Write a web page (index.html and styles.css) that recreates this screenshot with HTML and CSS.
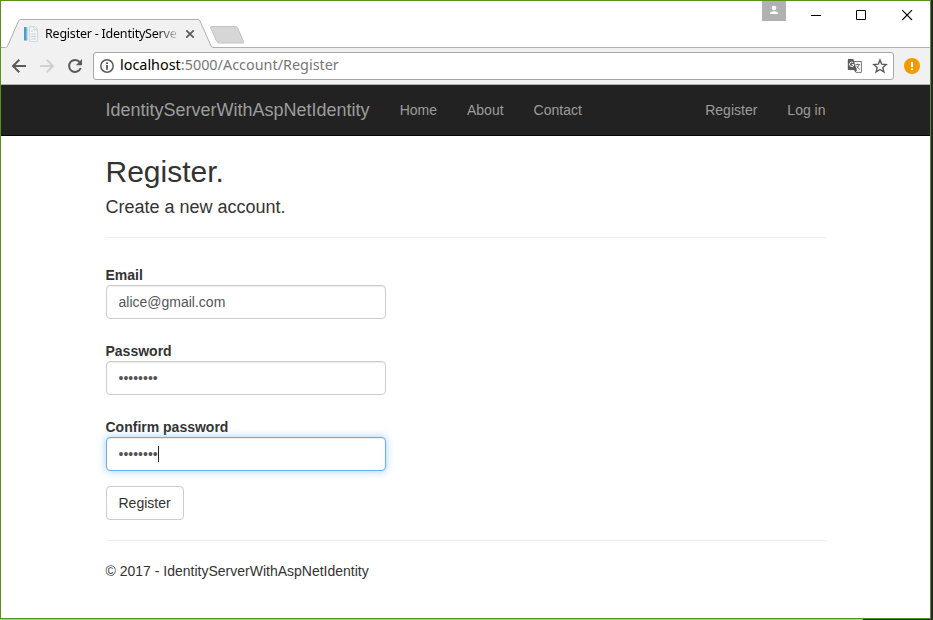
FILE: index.html
```html
<!DOCTYPE html>
<html lang="en">
<head>
<meta charset="utf-8">
<title>Register - IdentityServerWithAspNetIdentity</title>
<link rel="stylesheet" href="styles.css">
</head>
<body>
<div class="window">
  <div class="tabstrip">
    <svg class="tab-shape" width="929" height="48" viewBox="1 0 929 48">
      <path d="M1 47.5H5.500Q7 47.500 7.600 46L18.500 21Q19.200 19.500 20.500 19.500H198Q199.500 19.500 200 21L211 46Q211.600 47.500 213 47.500V49H1Z" fill="#f1f1f1"/>
      <path d="M1 47.5H5.500Q7 47.500 7.600 46L18.500 21Q19.200 19.500 20.500 19.500H198Q199.500 19.500 200 21L211 46Q211.600 47.500 213 47.500H930" fill="none" stroke="#b0b0b0"/>
      <path d="M212 26.500H235.500Q237 26.500 237.700 28L243.500 41.500Q244 43 242.500 43H219Q217.500 43 216.800 41.500L210.700 28Q210.200 26.500 212 26.500Z" fill="#d6d6d6" stroke="#c2c2c2"/>
    </svg>
    <div class="tab">
      <svg width="16" height="16" viewBox="0 0 16 16">
        <path d="M1 1H4V14.500H1Z" fill="#4f9bc9"/><path d="M3.500 1H5V14.500H3.500Z" fill="#bdd9e8"/>
        <path d="M6.500.500H11.500L14.500 3.500V15.500H6.500Z" fill="#f3f6f8" stroke="#ccd7df"/>
        <path d="M8 5H10M8 8H13M8 10.500H13M8 13H13M11 1V4H14" stroke="#c4cfd9" fill="none"/>
      </svg>
      <span class="tab-title">Register - IdentityServe</span>
      <svg class="tab-close" width="10" height="10" viewBox="0 0 10 10"><path d="M1.300 1.300L8.700 8.700M8.700 1.300L1.300 8.700" stroke="#5a5a5a" stroke-width="1.700"/></svg>
    </div>
    <div class="controls">
      <div class="user"><svg width="24" height="20" viewBox="0 0 24 20"><circle cx="12" cy="7" r="2.300" fill="#fff"/><path d="M8 13V11.800Q8.500 10.200 12 10.200T16 11.800V13Z" fill="#fff"/></svg></div>
      <svg width="120" height="30" viewBox="0 0 120 30" fill="none" stroke="#000">
        <path d="M25 14.500H35"/><path d="M70.500 9.500H79.500V18.500H70.500Z"/><path d="M116.200 9.200L126 19M126 9.200L116.200 19" stroke-width="1.100"/>
      </svg>
    </div>
  </div>
  <div class="toolbar">
    <svg width="92" height="36" viewBox="1 48 92 36" fill="none">
      <path d="M26 66H13.500M19.300 59.700L13 66L19.300 72.300" stroke="#5a5a5a" stroke-width="2"/>
      <path d="M40 66H52.500M46.700 59.700L53 66L46.700 72.300" stroke="#d0d0d0" stroke-width="2"/>
      <path d="M79.800 62.200A6 6 0 1 0 80.700 68" stroke="#5a5a5a" stroke-width="2"/>
      <path d="M82 59V65.200H75.800Z" fill="#5a5a5a"/>
    </svg>
    <div class="omnibox">
      <svg width="14" height="14" viewBox="0 0 14 14"><circle cx="7" cy="7" r="6.200" fill="none" stroke="#5a5a5a" stroke-width="1.500"/><path d="M7 3.200V4.900M7 6V10.800" stroke="#5a5a5a" stroke-width="1.800"/></svg>
      <span class="url"><b>localhost</b>:5000/Account/Register</span>
      <svg width="16" height="16" viewBox="0 0 16 16">
        <path d="M7 3.500H14.400V14.400H9" fill="#fff" stroke="#777"/>
        <path d="M1.500 1H6.300L9.800 12H1.500Q.800 12 .800 11V2Q.800 1 1.500 1Z" fill="#5a5a5a"/><path d="M7 12H10L8.500 14.500Z" fill="#5a5a5a"/>
        <path d="M6.200 4.700A2.200 2.200 0 1 0 6.900 6.600H4.900" stroke="#fff" fill="none"/>
        <path d="M8.500 6.500H13M10.700 5.500V6.500M12.300 6.500Q11.500 9 9.500 10.500M9.500 7.800Q11 10.500 13 11.500" stroke="#777" fill="none"/>
      </svg>
      <svg class="star" width="16" height="16" viewBox="0 0 16 16"><path d="M8 1.900L9.700 6.100L14.200 6.500L10.800 9.400L11.900 13.900L8 11.500L4.100 13.900L5.200 9.400L1.800 6.500L6.300 6.100Z" fill="none" stroke="#5a5a5a" stroke-width="1.400"/></svg>
    </div>
    <svg class="alert" width="16" height="16" viewBox="0 0 16 16"><circle cx="8" cy="8" r="8" fill="#f29900"/><path d="M8 4V9M8 10.300V12.200" stroke="#fff" stroke-width="2"/></svg>
  </div>
  <nav class="navbar">
    <div class="container nav">
      <a class="brand">IdentityServerWithAspNetIdentity</a>
      <a>Home</a><a>About</a><a>Contact</a>
      <a class="right">Register</a><a>Log in</a>
    </div>
  </nav>
  <main class="container">
    <h2>Register.</h2>
    <form>
      <h4>Create a new account.</h4>
      <hr>
      <div class="group"><label for="email">Email</label><input id="email" type="text" value="alice@gmail.com"></div>
      <div class="group"><label for="pw">Password</label><input id="pw" type="password" value="password"></div>
      <div class="group"><label for="pw2">Confirm password</label><div class="field"><input id="pw2" class="focused" type="password" value="password"><i class="caret"></i></div></div>
      <button type="button">Register</button>
    </form>
    <hr class="end">
    <footer>© 2017 - IdentityServerWithAspNetIdentity</footer>
  </main>
</div>
</body>
</html>
```
FILE: styles.css
```css
* { box-sizing: border-box; }
body { margin: 0; width: 933px; height: 620px; overflow: hidden; background: linear-gradient(90deg, #b9c3b1 863px, #262923 863px); font: 14px/20px "Liberation Sans", Arial, sans-serif; color: #333; }
.window { width: 931px; height: 619px; border: 1px solid #57901b; background: #fff; box-shadow: 2px 0 #24282a; }
svg { display: block; flex: none; }

.tabstrip { position: relative; height: 47px; display: flex; justify-content: space-between; }
.tab-shape { position: absolute; left: 0; top: -1px; }
.tab { position: relative; display: flex; align-items: center; height: 28px; margin: 19px 0 0 22px; color: #000; font: 12.5px/20px "Noto Sans", "Open Sans", sans-serif; }
.tab-title { width: 140px; margin-left: 6px; letter-spacing: -0.22px; white-space: nowrap; -webkit-mask-image: linear-gradient(90deg, #000 112px, transparent 136px); mask-image: linear-gradient(90deg, #000 112px, transparent 136px); }
.controls { position: relative; display: flex; width: 168px; }
.controls svg { overflow: visible; }
.user { width: 24px; height: 20px; background: #b1b1b1; }

.toolbar { display: flex; height: 37px; background: #f1f1f1; border-bottom: 1px solid #b0b0b0; }
.omnibox { display: flex; align-items: center; width: 801px; height: 28px; margin-top: 4px; padding: 0 5px 0 6px; background: #fff; border: 1px solid #a6a6a6; border-radius: 3px; }
.url { flex: 1; margin: -2px 0 0 6px; color: #777; font: 14.4px/24px "Noto Sans", "Open Sans", sans-serif; white-space: nowrap; }
.url b { font-weight: 400; color: #000; }
.star { margin-left: 9px; }
.alert { margin: 10px 0 0 10px; }

.container { width: 750px; margin: 0 auto; padding: 0 15px; }
.navbar { height: 51px; background: #222; border-bottom: 1px solid #080808; }
.nav { display: flex; }
.nav a { padding: 15px; color: #9d9d9d; }
.nav .brand { padding-left: 0; font-size: 18px; }
.nav .right { margin-left: auto; }
.nav a:last-child { padding-right: 0; }

h2, h4 { font-weight: 400; line-height: 1.1; margin: 0 0 10px; }
h2 { padding-top: 19px; font-size: 30px; }
h4 { font-size: 18px; }
hr { margin: 20px 0; border: 0; border-top: 1px solid #eee; }
h4 + hr { margin-top: 19px; }
.group { padding-top: 7px; margin-bottom: 15px; }
label { display: block; font-weight: 700; }
input { display: block; width: 280px; height: 34px; padding: 6px 12px; font: inherit; color: #555; background: #fff; border: 1px solid #ccc; border-radius: 4px; outline: 0; box-shadow: inset 0 1px 1px rgba(0,0,0,.075); }
.focused { border-color: #66afe9; box-shadow: inset 0 1px 1px rgba(0,0,0,.075), 0 0 8px rgba(102,175,233,.6); }
.field { position: relative; width: 280px; }
.caret { position: absolute; left: 52px; top: 9px; width: 1px; height: 16px; background: #222; }
button { display: block; height: 34px; padding: 6px 12px; font: inherit; color: #333; background: #fff; border: 1px solid #ccc; border-radius: 4px; }
```
